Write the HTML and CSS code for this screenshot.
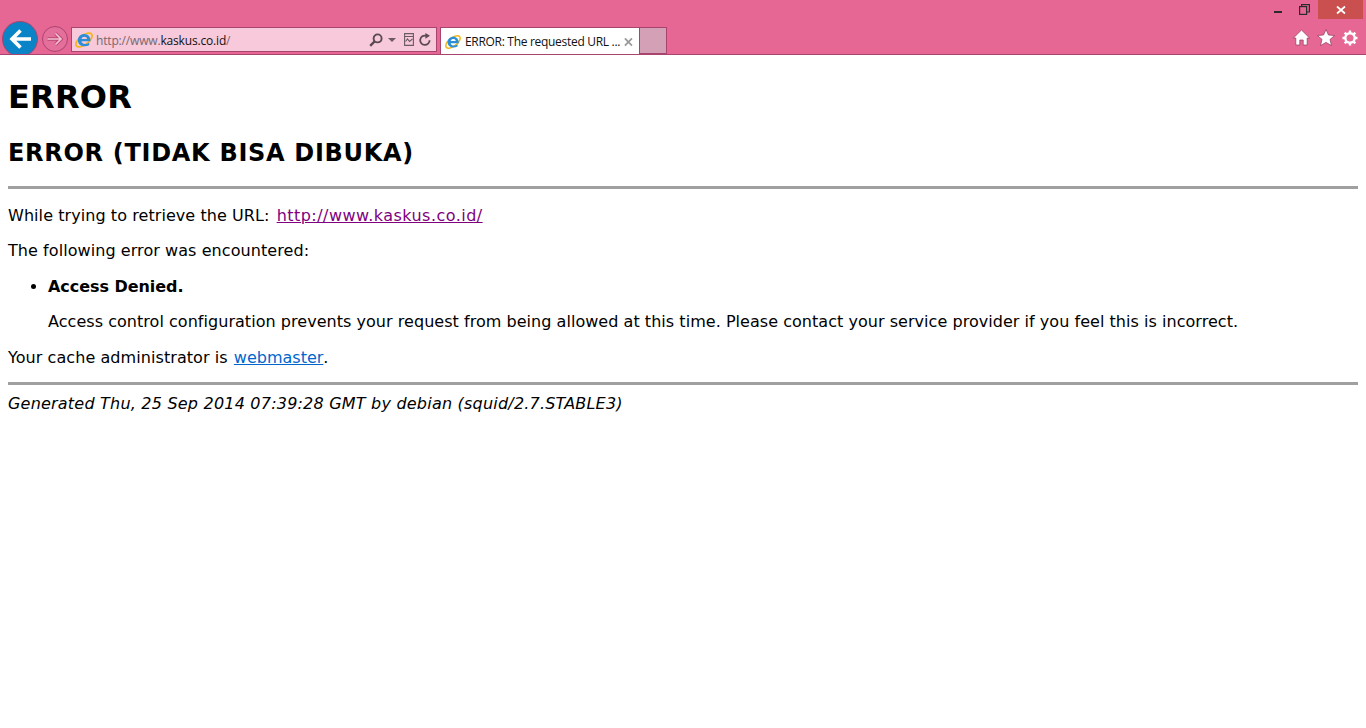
FILE: index.html
```html
<!DOCTYPE html>
<html lang="en">
<head>
<meta charset="utf-8">
<title>ERROR: The requested URL could not be retrieved</title>
<link rel="stylesheet" href="styles.css">
</head>
<body>
<svg class="defs" width="0" height="0" aria-hidden="true"><symbol id="ie" viewBox="0 0 18 18"><ellipse cx="9" cy="9" rx="9.6" ry="4.6" transform="rotate(-38 9 9)" fill="none" stroke="#f2b51a" stroke-width="1.7"/><path d="M2.9 9.4C2.9 5.6 5.6 3 9.3 3 13.1 3 15.6 5.8 15.6 10.3H6.4C6.7 13 10.8 13.8 14.2 11.7V14.2C9.5 16.7 2.9 14.9 2.9 9.4ZM6.5 7.9H12.1C11.8 5 7 5 6.5 7.9Z" fill="#2a8fd6"/></symbol></svg>
<header class="chrome">
  <div class="caption">
    <span class="cap-btn"><svg width="10" height="10" viewBox="0 0 10 10"><rect x="1" y="6" width="8" height="2" fill="#2b2b2b"/></svg></span>
    <span class="cap-btn"><svg width="11" height="11" viewBox="0 0 11 11" fill="none" stroke="#2b2b2b" stroke-width="1.2"><rect x="0.6" y="2.6" width="7" height="7.8"/><path d="M2.6 2.4V0.6H10.4V8H8"/></svg></span>
    <span class="cap-close"><svg width="10" height="10" viewBox="0 0 10 10" stroke="#fff" stroke-width="1.7"><path d="M1 1.5L9 8.5M9 1.5L1 8.5"/></svg></span>
  </div>
  <div class="navrow">
    <div class="back"><svg width="24" height="24" viewBox="0 0 24 24" fill="none" stroke="#fff" stroke-width="3.6"><path d="M23 12H4M12.5 3.5L4 12l8.5 8.5"/></svg></div>
    <div class="forward"><svg width="18" height="16" viewBox="0 0 18 16" fill="none"><path d="M1.5 8H15M9.5 2.5L15 8l-5.5 5.5" stroke="#b8486f" stroke-width="3.4"/><path d="M1.5 8H15M9.5 2.5L15 8l-5.5 5.5" stroke="#f4bfd2" stroke-width="1.7"/></svg></div>
    <div class="address">
      <svg class="ie" width="18" height="18"><use href="#ie"/></svg>
      <span class="url"><span class="url-dim">http://www.</span>kaskus.co.id<span class="url-dim">/</span></span>
      <svg class="mag" width="14" height="14" viewBox="0 0 14 14" fill="none" stroke="#5b4a52" stroke-width="1.9"><circle cx="8.6" cy="5.4" r="4"/><path d="M5.6 8.4L1.2 12.8" stroke-width="2.4"/></svg>
      <svg class="caret" width="8" height="4" viewBox="0 0 8 4"><path d="M0 0H8L4 4Z" fill="#6b5a62"/></svg>
      <svg class="compat" width="10" height="13" viewBox="0 0 10 13" fill="none" stroke="#6b5a62" stroke-width="1.1"><path d="M0.6 0.6H9.4V12.4H0.6Z"/><path d="M0.6 3.5H9.4M1.5 8.5L3.5 6 5.5 8.5 8.5 6"/></svg>
      <svg width="12" height="13" viewBox="0 0 12 13" fill="none" stroke="#5b4a52" stroke-width="1.8"><path d="M10.6 7.2A4.7 4.7 0 1 1 7 2.7"/><path d="M6.4 0L11 2.8 6.4 5.8Z" fill="#5b4a52" stroke="none"/></svg>
    </div>
    <div class="tab">
      <svg class="ie" width="18" height="18"><use href="#ie"/></svg>
      <span class="tab-title">ERROR: The requested URL ...</span>
      <svg width="10" height="10" viewBox="0 0 10 10" stroke="#9a9a9a" stroke-width="2"><path d="M1 1L9 9M9 1L1 9"/></svg>
    </div>
    <div class="newtab"></div>
    <div class="tools">
      <svg width="17" height="17" viewBox="0 0 17 17"><path d="M8.5 1L16.6 9H14.2V16H10.2V11H6.8V16H2.8V9H0.4Z" fill="#fff" stroke="#8c3a5c" stroke-width="0.7"/></svg>
      <svg width="18" height="17" viewBox="0 0 18 17"><path d="M9 0.5L11.5 6 17.6 6.5 13 10.4 14.5 16.6 9 13.4 3.5 16.6 5 10.4 0.4 6.5 6.5 6Z" fill="#fff" stroke="#8c3a5c" stroke-width="0.7"/></svg>
      <svg width="16" height="16" viewBox="0 0 16 16"><circle cx="8" cy="8" r="4.7" fill="none" stroke="#fff" stroke-width="2.4"/><path d="M8 0.5V3.5M8 12.5V15.5M0.5 8H3.5M12.5 8H15.5M2.7 2.7L4.8 4.8M11.2 11.2L13.3 13.3M13.3 2.7L11.2 4.8M4.8 11.2L2.7 13.3" stroke="#fff" stroke-width="2.4"/></svg>
    </div>
  </div>
</header>
<main class="page">
  <h1>ERROR</h1>
  <h2>ERROR (TIDAK BISA DIBUKA)</h2>
  <hr>
  <p>While trying to retrieve the URL: <a class="visited" href="#">http://www.kaskus.co.id/</a></p>
  <p>The following error was encountered:</p>
  <ul>
    <li><p><strong>Access Denied.</strong></p><p class="long">Access control configuration prevents your request from being allowed at this time. Please contact your service provider if you feel this is incorrect.</p></li>
  </ul>
  <p>Your cache administrator is <a class="link" href="#">webmaster</a>.</p>
  <hr class="hr-end">
  <address>Generated Thu, 25 Sep 2014 07:39:28 GMT by debian (squid/2.7.STABLE3)</address>
</main>
</body>
</html>
```
FILE: styles.css
```css
* { box-sizing: border-box; }
html, body { margin: 0; height: 100%; background: #fff; overflow: hidden; }
body { font-family: "DejaVu Sans", Verdana, sans-serif; color: #000; }
.defs { display: block; height: 0; }
.chrome { height: 55px; background: #e76794; border-bottom: 1px solid #a9446e; display: flex; flex-direction: column; overflow: hidden; }
.caption { height: 19px; flex: none; display: flex; justify-content: flex-end; align-items: stretch; padding-right: 3px; }
.cap-btn { width: 26px; display: flex; align-items: center; justify-content: center; }
.cap-close { width: 45px; margin-left: 1px; background: #c9504f; display: flex; align-items: center; justify-content: center; }
.navrow { flex: 1; display: flex; align-items: flex-start; padding-left: 2px; min-height: 0; }
.back { width: 36px; height: 36px; margin-top: 2px; flex: none; border-radius: 50%; background: #0a84c6; border: 1px solid #a9446e; display: flex; align-items: center; justify-content: center; }
.forward { width: 26px; height: 26px; margin: 7px 0 0 4px; flex: none; border-radius: 50%; border: 1px solid #a9446e; background: #e56f9b; display: flex; align-items: center; justify-content: center; }
.address { width: 366px; height: 25px; margin: 8px 0 0 3px; flex: none; background: #f7c9da; border: 1px solid #a9446e; display: flex; align-items: center; padding: 0 5px 0 3px; }
.address .ie { margin-right: 3px; }
.url { flex: 1; padding-top: 1px; font: 12px "Open Sans", sans-serif; letter-spacing: -0.17px; color: #111; white-space: nowrap; }
.url-dim { color: #77676e; }
.mag { margin-right: 5px; }
.caret { margin-right: 8px; }
.compat { margin-right: 5px; }
.tab { width: 200px; height: 28px; margin: 8px 0 0 3px; flex: none; background: #fff; border: 1px solid #a9446e; border-bottom: 0; display: flex; align-items: center; padding: 0 6px 0 4px; gap: 4px; }
.tab-title { flex: 1; font: 12px "Open Sans", sans-serif; letter-spacing: -0.3px; color: #111; white-space: nowrap; }
.newtab { width: 27px; height: 27px; margin-top: 8px; flex: none; background: #d3a0b6; border: 1px solid #a9446e; border-left: 0; }
.tools { margin-left: auto; display: flex; align-items: center; gap: 7px; margin-top: 10px; padding-right: 8px; }
.page { padding: 0 8px; font-size: 16px; }
h1 { font-size: 32px; line-height: 38px; letter-spacing: 0.2px; margin: 23px 0 0; }
h2 { font-size: 24px; line-height: 28px; letter-spacing: 0.7px; margin: 23px 0 0; }
hr { height: 3px; border: 0; background: #a0a0a0; margin: 19px 0 0; }
p { margin: 16.5px 0 0; line-height: 19px; letter-spacing: 0.07px; }
hr + p { margin-top: 16.5px; }
ul { margin: 16.5px 0 0; padding-left: 40px; }
li p:first-child { margin-top: 0; }
strong { letter-spacing: -0.05px; }
.long { letter-spacing: 0.04px; }
.visited { margin-left: 2px; color: #800080; letter-spacing: 0.47px; }
.link { margin-left: 1px; color: #0066cc; letter-spacing: 0; }
.hr-end { margin-top: 15px; }
address { font-style: italic; line-height: 19px; letter-spacing: 0.21px; margin-top: 9px; }
```
